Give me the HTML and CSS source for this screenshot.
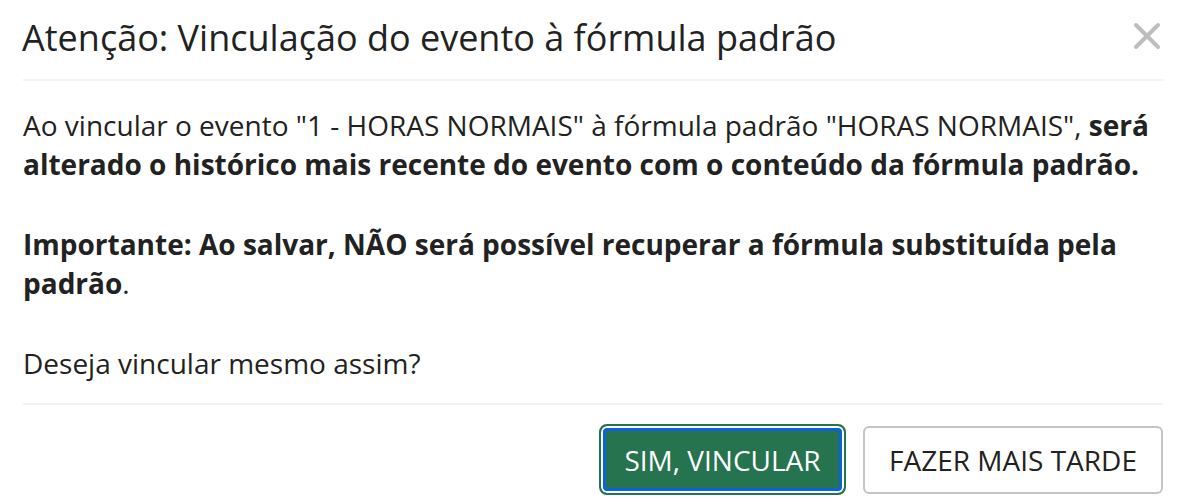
FILE: index.html
```html
<!DOCTYPE html>
<html lang="pt-BR">
<head>
  <meta charset="UTF-8" />
  <title>Atenção</title>
  <link rel="stylesheet" href="styles.css">
</head>
<body>
  <div class="modal">
    <div class="modal-header">
      <h2>Atenção: Vinculação do evento à fórmula padrão</h2>
      <button class="close" aria-label="Fechar">
        <svg width="28" height="28" viewBox="0 0 28 28">
          <path d="M3 3 L25 25 M25 3 L3 25" stroke="#bdbdbd" stroke-width="4" stroke-linecap="round" />
        </svg>
      </button>
    </div>

    <div class="modal-body">
      <p>Ao vincular o evento "1 - HORAS NORMAIS" à fórmula padrão "HORAS NORMAIS", <strong>será alterado o histórico mais recente do evento com o conteúdo da fórmula padrão.</strong></p>
      <p><strong>Importante: Ao salvar, NÃO será possível recuperar a fórmula substituída pela padrão</strong>.</p>
      <p>Deseja vincular mesmo assim?</p>
    </div>

    <div class="modal-footer">
      <button class="btn btn-primary">SIM, VINCULAR</button>
      <button class="btn btn-default">FAZER MAIS TARDE</button>
    </div>
  </div>
</body>
</html>
```

FILE: styles.css
```css
body {
  margin: 0;
  font-family: 'Open Sans', sans-serif;
  background: #fff;
  color: #222;
}

.modal {
  padding: 0 25px 0 23px;
}

.modal-header {
  display: flex;
  align-items: center;
  justify-content: space-between;
  height: 79px;
  border-bottom: 2px solid #f2f2f2;
}

.modal-header h2 {
  margin: 0 0 4px -1px;
  font-size: 36px;
  font-weight: 400;
  color: #222;
}

.close {
  background: none;
  border: none;
  padding: 0;
  margin-right: 2px;
  margin-top: -4px;
  cursor: pointer;
}

.modal-body {
  padding: 25px 0 20px;
  font-size: 28px;
  line-height: 39px;
}

.modal-body p {
  margin: 0 0 41px;
}

.modal-body p:last-child {
  margin-bottom: 0;
}

.modal-footer {
  border-top: 2px solid #f2f2f2;
  display: flex;
  justify-content: flex-end;
  align-items: center;
  gap: 17px;
  padding-top: 19px;
}

.btn {
  font-family: 'Open Sans', sans-serif;
  font-size: 28px;
  height: 68px;
  padding: 0 20px;
  border-radius: 6px;
  cursor: pointer;
}

/* botão com foco: borda verde + anel branco/azul */
.btn-primary {
  background: #25734f;
  color: #fff;
  border: 2px solid #25734f;
  box-shadow: inset 0 0 0 2px #fff, inset 0 0 0 5px #0a63d8;
  width: 247px;
  height: 71px;
  border-radius: 8px;
}

.btn-default {
  background: #fff;
  color: #222;
  border: 2px solid #c4c4c4;
  width: 300px;
}
```
